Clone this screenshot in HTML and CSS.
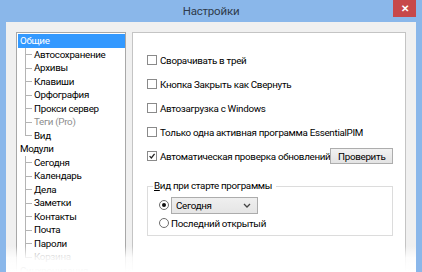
FILE: index.html
```html
<!DOCTYPE html>
<html lang="ru">
<head>
<meta charset="utf-8">
<title>Настройки</title>
<link rel="stylesheet" href="styles.css">
</head>
<body>
<div class="window">
  <div class="titlebar">
    <span class="title">Настройки</span>
    <span class="close">✕</span>
  </div>
  <div class="client">
    <div class="tree">
      <div class="node sel">Общие</div>
      <ul class="kids">
        <li>Автосохранение</li>
        <li>Архивы</li>
        <li>Клавиши</li>
        <li>Орфография</li>
        <li>Прокси сервер</li>
        <li class="dis">Теги (Pro)</li>
        <li>Вид</li>
      </ul>
      <div class="node">Модули</div>
      <ul class="kids">
        <li>Сегодня</li>
        <li>Календарь</li>
        <li>Дела</li>
        <li>Заметки</li>
        <li>Контакты</li>
        <li>Почта</li>
        <li>Пароли</li>
        <li class="dis">Корзина</li>
      </ul>
      <div class="node">Синхронизация</div>
    </div>
    <div class="panel">
      <div class="row"><span class="cb"></span>Сворачивать в трей</div>
      <div class="row"><span class="cb"></span>Кнопка Закрыть как Свернуть</div>
      <div class="row"><span class="cb"></span>Автозагрузка с Windows</div>
      <div class="row"><span class="cb"></span>Только одна активная программа EssentialPIM</div>
      <div class="row"><span class="cb on"><svg viewBox="0 0 10 10" width="10" height="10"><path d="M2 5.2 L4.2 7.4 L8.2 2.4" fill="none" stroke="#222" stroke-width="1.6"/></svg></span>Автоматическая проверка обновлений<span class="btn">Проверить</span></div>
      <fieldset class="group">
        <legend><u>В</u>ид при старте программы</legend>
        <div class="rrow"><span class="rb on"></span><span class="combo">Сегодня<svg class="chev" viewBox="0 0 8 5" width="8" height="5"><path d="M1 1 L4 4 L7 1" fill="none" stroke="#444" stroke-width="1.3"/></svg></span></div>
        <div class="rrow"><span class="rb"></span>Последний открытый</div>
      </fieldset>
    </div>
    <div class="fade"></div>
  </div>
</div>
</body>
</html>
```
FILE: styles.css
```css
* { box-sizing: border-box; }
html, body { margin: 0; padding: 0; }
body {
  width: 422px; height: 272px; overflow: hidden;
  background: #8ab7ea;
  font-family: Roboto, "Noto Sans", sans-serif;
  font-size: 9.8px; letter-spacing: -0.3px; color: #000; white-space: nowrap;
}
.window { display: flex; flex-direction: column; height: 272px; }
.titlebar {
  height: 22px; position: relative;
  display: flex; align-items: center; justify-content: center;
}
.title { font-size: 11.5px; letter-spacing: -0.2px; color: #2f3b4b; margin-top: -1px; }
.close {
  position: absolute; right: 6px; top: 0;
  width: 23px; height: 17px; background: #c7484a;
  color: #fff; font-size: 10px; font-weight: bold; letter-spacing: 0;
  display: flex; align-items: center; justify-content: center;
}
.client {
  position: relative;
  flex: 1; margin: 0 6px; background: #f0f0f0;
  padding: 10px 10px 0 10px;
  display: flex; gap: 6px; overflow: hidden;
}
.tree {
  flex: none; width: 110px; height: 260px; background: #fff;
  border: 1px solid #a8a8a8; padding: 1px 0 0 1px; overflow: hidden;
}
.node { height: 13.5px; line-height: 13.5px; padding-left: 2px; }
.node.sel { background: #3399ff; color: #fff; }
.kids { list-style: none; margin: 0; padding: 0 0 0 16px; }
.kids li { position: relative; height: 13.5px; line-height: 13.5px; }
.kids li::before {
  content: ""; position: absolute; left: -9px; top: 0; bottom: 0;
  border-left: 1px solid #b4b4b4;
}
.kids li:last-child::before { bottom: 50%; }
.kids li::after {
  content: ""; position: absolute; left: -9px; width: 7px; top: 50%;
  border-top: 1px solid #b4b4b4;
}
.dis { color: #8d8d8d; }
.panel {
  flex: 1; min-width: 0; height: 260px; background: #fff;
  border: 1px solid #c4c4c4;
  padding: 15px 12px 0 14px;
}
.row { height: 24px; display: flex; align-items: center; }
.cb {
  width: 10px; height: 10px; border: 1px solid #8a8a8a; background: #fff;
  margin-right: 3px; flex: none; display: flex; align-items: center; justify-content: center;
}
.cb svg { width: 8px; height: 8px; }
.btn {
  margin-left: auto; width: 64px; height: 16px;
  border: 1px solid #adadad; background: linear-gradient(#f2f2f2, #e3e3e3);
  display: flex; align-items: center; justify-content: center;
}
.group {
  margin: 12px 0 0 0; padding: 4px 0 3px 11px;
  border: 1px solid #dcdcdc;
}
.group legend { padding: 0 4px 0 1px; margin-left: -6px; line-height: 12px; }
.group u { text-decoration: underline; }
.rrow { height: 18px; display: flex; align-items: center; }
.rb {
  width: 10px; height: 10px; border-radius: 50%; border: 1px solid #6d6d6d;
  background: #fff; margin-right: 2px; flex: none; position: relative;
}
.rb.on::after {
  content: ""; position: absolute; left: 2px; top: 2px; width: 4px; height: 4px;
  border-radius: 50%; background: #111;
}
.combo {
  width: 87px; height: 17px; border: 1px solid #acacac;
  background: linear-gradient(#efefef, #e5e5e5);
  display: flex; align-items: center; padding-left: 4px;
}
.chev { margin-left: auto; margin-right: 6px; }
.fade {
  position: absolute; left: -6px; right: -6px; bottom: 0; height: 26px;
  background: linear-gradient(rgba(255,255,255,0), rgba(255,255,255,0.85) 45%, #fff);
}
```
